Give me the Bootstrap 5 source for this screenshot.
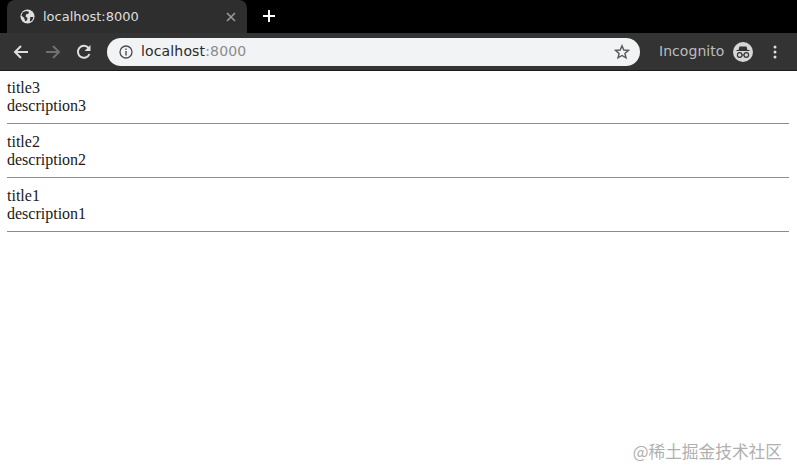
<!DOCTYPE html>
<html lang="en">
<head>
<meta charset="utf-8">
<title>localhost:8000</title>
<link href="https://cdn.jsdelivr.net/npm/bootstrap@5.3.0/dist/css/bootstrap.min.css" rel="stylesheet">
<style>
html,body{height:100%;overflow:hidden;background:#fff}
body{position:relative}
.ui{font-family:"DejaVu Sans",sans-serif}
.tabstrip{height:33px;background:#000;padding-left:7px}
.tabshape{width:240px;height:33px;background:#2e2e2e;border-radius:8px 8px 0 0;padding:0 11px 0 13px;color:#dedede;font-size:13px}
.tabtitle{margin-left:8px}
.tabclose{margin-left:auto}
.newtab{margin-left:16px;margin-top:-1px}
.toolbar{height:38px;background:#333;border-bottom:1px solid #1c1c1c;padding-left:12px;padding-right:20px}
.navgap{margin-left:14px}
.omni{width:533px;height:28px;background:#f1f3f4;border-radius:14px;margin-left:15px;padding:0 10px 0 12px;font-size:14px;color:#2a2a2a;letter-spacing:.15px}
.omni .porttext{color:#8a8c8f}
.omnitext{margin-left:8px}
.star{margin-left:auto}
.incog{color:#bdbdbd;font-size:14px;margin-left:19px;letter-spacing:.05px}
.incogicon{margin-left:9px}
.menudots{margin-left:auto}
.pagebody{padding:8px 8px 0 7px;font-family:"Liberation Serif",serif;font-size:16px;line-height:18px;color:#1a1a1a}
.pagebody hr{margin:8px 0;border:0;border-top:1px solid #8c8c8c;height:2px;opacity:1}
.watermark{position:absolute;right:15px;top:440px;font-family:"Noto Sans CJK SC","Liberation Sans",sans-serif;font-size:16.7px;line-height:22px;color:#b0b0b0;white-space:nowrap}
</style>
</head>
<body>
<div class="ui">
  <div class="tabstrip d-flex align-items-start">
    <div class="tabshape d-flex align-items-center">
      <svg width="15" height="15" viewBox="0 0 16 16"><circle cx="8" cy="8" r="7.5" fill="#dedede"/><path d="M3 3.500 6.500 2.200 9.500 3 9 5 6.500 5.500 6 8 8 9.500 7.500 12 5.500 13 4.500 9.500 1.500 7ZM11 8.500 14.300 8.500 13 12 10.500 13.500Z" fill="#2e2e2e"/></svg>
      <span class="tabtitle">localhost:8000</span>
      <svg class="tabclose" width="10" height="10" viewBox="0 0 10 10"><path d="M1 1 9 9M9 1 1 9" stroke="#9a9a9a" stroke-width="1.600"/></svg>
    </div>
    <svg class="newtab align-self-center" width="12" height="12" viewBox="0 0 12 12"><path d="M6 0V12M0 6H12" stroke="#fff" stroke-width="2"/></svg>
  </div>
  <div class="toolbar d-flex align-items-center">
    <svg width="18" height="16" viewBox="0 0 18 16"><path d="M16 8H3M9 2 3 8l6 6" fill="none" stroke="#dedede" stroke-width="2"/></svg>
    <svg class="navgap" width="18" height="16" viewBox="0 0 18 16"><path d="M2 8H15M9 2l6 6-6 6" fill="none" stroke="#707070" stroke-width="2"/></svg>
    <svg class="navgap" width="16" height="16" viewBox="0 0 16 16"><path d="M13.500 10A6 6 0 1 1 12.600 4" fill="none" stroke="#dedede" stroke-width="2"/><path d="M14.500 1V7H8.500Z" fill="#dedede"/></svg>
    <div class="omni d-flex align-items-center">
      <svg width="14" height="14" viewBox="0 0 14 14"><circle cx="7" cy="7" r="6" fill="none" stroke="#4a4c4f" stroke-width="1.300"/><path d="M7 6V10.500M7 3.500V5" stroke="#4a4c4f" stroke-width="1.400"/></svg>
      <span class="omnitext">localhost<span class="porttext">:8000</span></span>
      <svg class="star" width="16" height="16" viewBox="0 0 16 16"><path d="M8 1.800 9.800 6 14.400 6.400 10.900 9.400 12 13.900 8 11.500 4 13.900 5.100 9.400 1.600 6.400 6.200 6Z" fill="none" stroke="#55575a" stroke-width="1.400"/></svg>
    </div>
    <span class="incog">Incognito</span>
    <svg class="incogicon" width="20" height="20" viewBox="0 0 20 20"><circle cx="10" cy="10" r="10" fill="#d6d6d6"/><path d="M6.500 4.500h7l1 3.500h2v1H3.500v-1h2Z" fill="#333"/><circle cx="6.700" cy="13" r="2.300" fill="none" stroke="#333" stroke-width="1.200"/><circle cx="13.300" cy="13" r="2.300" fill="none" stroke="#333" stroke-width="1.200"/><path d="M9 13h2" stroke="#333"/></svg>
    <svg class="menudots" width="4" height="14" viewBox="0 0 4 14"><circle cx="2" cy="2" r="1.500" fill="#dedede"/><circle cx="2" cy="7" r="1.500" fill="#dedede"/><circle cx="2" cy="12" r="1.500" fill="#dedede"/></svg>
  </div>
</div>
<div class="pagebody">
  <div>title3</div><div>description3</div><hr>
  <div>title2</div><div>description2</div><hr>
  <div>title1</div><div>description1</div><hr>
</div>
<div class="watermark">@稀土掘金技术社区</div>
<script src="https://cdn.jsdelivr.net/npm/bootstrap@5.3.0/dist/js/bootstrap.bundle.min.js"></script>
</body>
</html>
